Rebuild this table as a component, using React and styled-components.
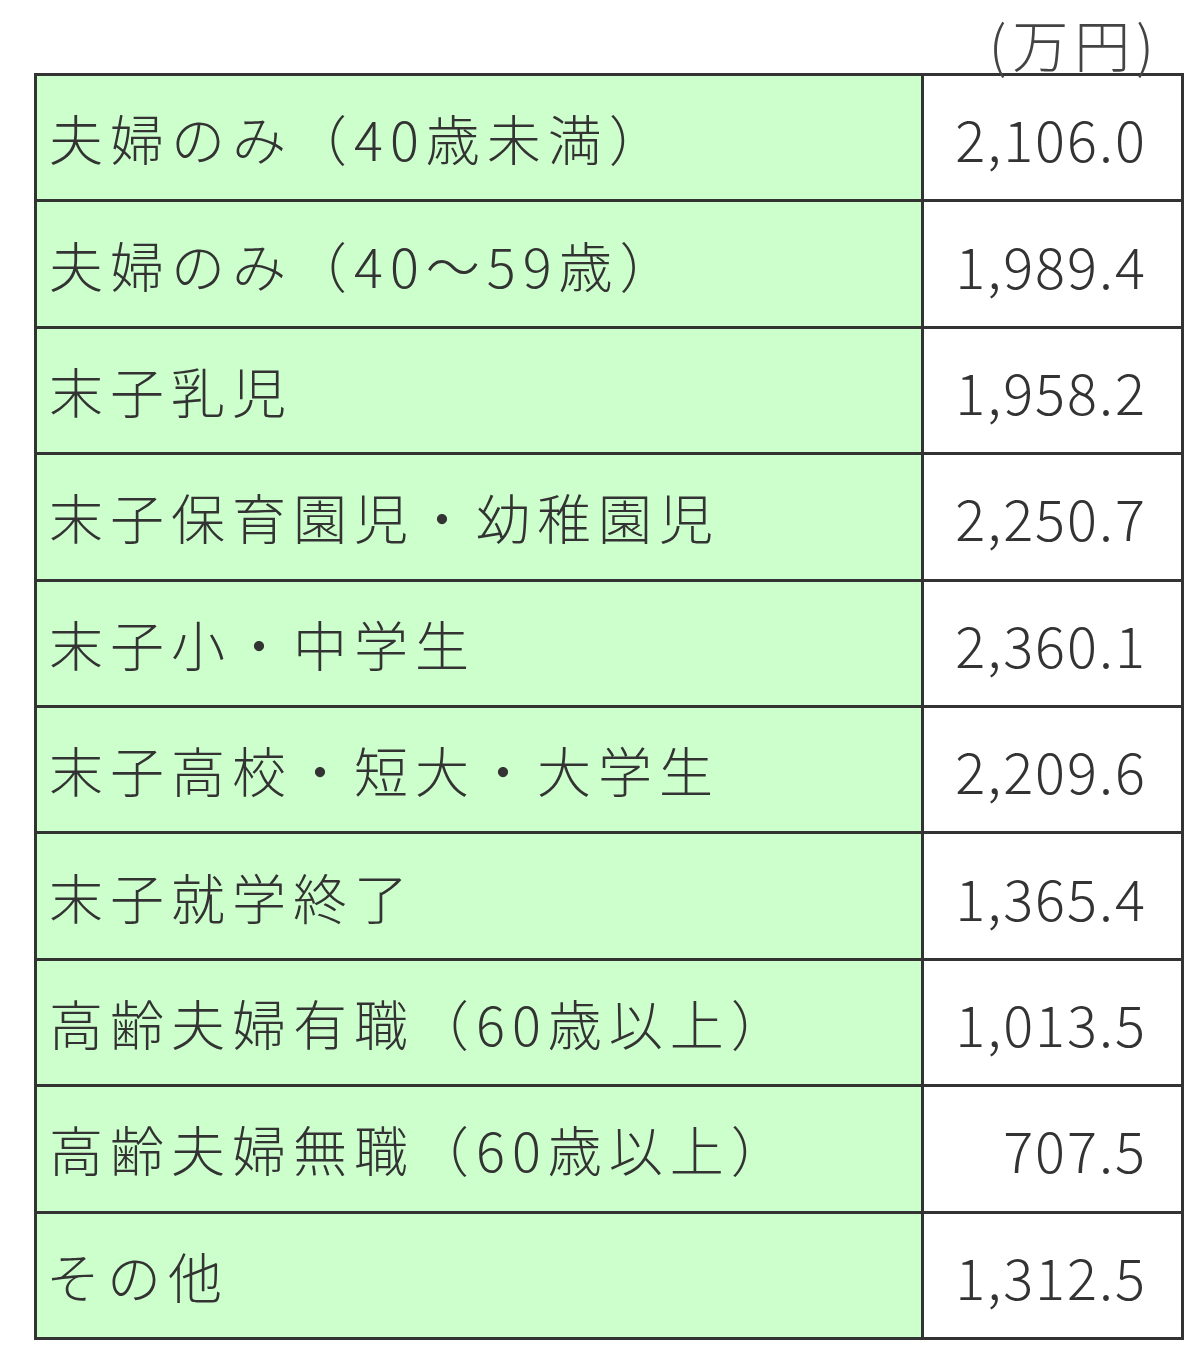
import styled, { createGlobalStyle } from "styled-components";

const GlobalStyle = createGlobalStyle`
  html, body {
    margin: 0;
    padding: 0;
    background: #ffffff;
  }
  body {
    font-family: "Noto Sans CJK JP", "Noto Sans", sans-serif;
    color: #333333;
  }
`;

const Page = styled.div`
  width: 1200px;
  height: 1363px;
  padding: 0 18px 0 34px;
  box-sizing: border-box;
`;

const Unit = styled.div`
  height: 73px;
  display: flex;
  justify-content: flex-end;
  align-items: flex-end;
  padding-right: 22px;
  padding-bottom: 2px;
  font-size: 56px;
  font-weight: 300;
  line-height: 1;
  color: #444;
  letter-spacing: 6px;
  box-sizing: border-box;
`;

const Table = styled.table`
  width: 1150px;
  border-collapse: collapse;
  table-layout: fixed;
`;

const Row = styled.tr`
  height: 126.4px;
`;

const Label = styled.td`
  width: 872px;
  background: #ccffcc;
  border: 3px solid #333;
  padding: 0 0 0 ${(p) => (p.$tight ? 9 : 12)}px;
  font-size: 54px;
  font-weight: 300;
  white-space: nowrap;
  letter-spacing: 7px;
  color: #333;
`;

const Value = styled.td`
  background: #ffffff;
  border: 3px solid #333;
  padding: 0 34px 0 0;
  text-align: right;
  font-size: 56px;
  font-weight: 300;
  letter-spacing: 2px;
  color: #333;
`;

const rows = [
  ["夫婦のみ（40歳未満）", "2,106.0"],
  ["夫婦のみ（40～59歳）", "1,989.4"],
  ["末子乳児", "1,958.2"],
  ["末子保育園児・幼稚園児", "2,250.7"],
  ["末子小・中学生", "2,360.1"],
  ["末子高校・短大・大学生", "2,209.6"],
  ["末子就学終了", "1,365.4"],
  ["高齢夫婦有職（60歳以上）", "1,013.5"],
  ["高齢夫婦無職（60歳以上）", "707.5"],
  ["その他", "1,312.5"],
];

const App = () => {
  return (
    <Page>
      <GlobalStyle />
      <Unit>(万円)</Unit>
      <Table>
        <tbody>
          {rows.map(([label, value]) => (
            <Row key={label}>
              <Label $tight={label === "その他"}>{label}</Label>
              <Value>{value}</Value>
            </Row>
          ))}
        </tbody>
      </Table>
    </Page>
  );
};

export default App;
